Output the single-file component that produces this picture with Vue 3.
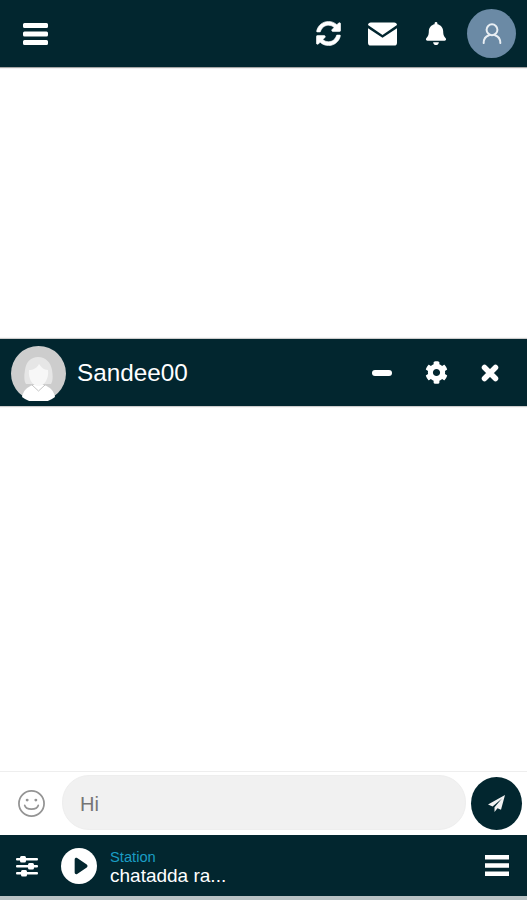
<script setup>
const topIcons = ['sync', 'mail', 'bell']
</script>

<template>
  <div class="page">
    <header class="topbar">
      <button class="icon-btn menu">
        <svg width="25" height="22" viewBox="0 0 25 22"><path d="M1.500 0h22a1.500 1.500 0 0 1 1.500 1.500v2a1.500 1.500 0 0 1-1.500 1.500h-22A1.500 1.500 0 0 1 0 3.500v-2A1.500 1.500 0 0 1 1.500 0zm0 8.500h22A1.500 1.500 0 0 1 25 10v2a1.500 1.500 0 0 1-1.500 1.500h-22A1.500 1.500 0 0 1 0 12v-2a1.500 1.500 0 0 1 1.500-1.500zm0 8.500h22a1.500 1.500 0 0 1 1.500 1.500v2a1.500 1.500 0 0 1-1.500 1.500h-22A1.500 1.500 0 0 1 0 20.500v-2A1.500 1.500 0 0 1 1.500 17z" fill="#fff"/></svg>
      </button>
      <div class="spacer"></div>
      <div class="top-actions">
        <template v-for="name in topIcons" :key="name">
          <svg v-if="name === 'sync'" class="sync" width="25" height="25" viewBox="0 0 512 512"><path fill="#fff" stroke="#fff" stroke-width="12" d="M370.700 133.300C339.500 104 298.900 88 255.800 88c-77.500.100-144.300 53.200-162.800 126.900-1.300 5.400-6.100 9.100-11.700 9.100H24.100c-7.500 0-13.200-6.800-11.800-14.200C33.900 94.900 134.800 8 256 8c66.400 0 126.800 26.100 171.300 68.700L463 41c15.100-15.100 41-4.400 41 17v134c0 13.300-10.700 24-24 24H346c-21.400 0-32.100-25.900-17-41l41.700-41.700zM32 296h134c21.400 0 32.100 25.900 17 41l-41.700 41.700c31.200 29.300 71.800 45.300 114.900 45.300 77.400-.1 144.300-53.100 162.800-126.800 1.300-5.400 6.100-9.100 11.700-9.100h57.300c7.500 0 13.200 6.800 11.800 14.200C478.100 417.100 377.200 504 256 504c-66.400 0-126.800-26.100-171.300-68.700L49 471c-15.100 15.100-41 4.400-41-17V320c0-13.300 10.700-24 24-24z"/></svg>
          <svg v-else-if="name === 'mail'" class="mail" width="29" height="24" viewBox="0 0 30 24"><path fill="#fff" d="M3 0h24a3 3 0 0 1 3 2.800L15 13 0 2.800A3 3 0 0 1 3 0z"/><path fill="#fff" d="M0 6l15 10L30 6v15a3 3 0 0 1-3 3H3a3 3 0 0 1-3-3z"/></svg>
          <svg v-else class="bell" width="22" height="23" viewBox="0 0 448 512"><path fill="#fff" d="M224 512c35.300 0 64-28.700 64-64H160c0 35.300 28.700 64 64 64zm215.400-149.700c-19.300-20.800-55.500-52-55.500-154.300 0-77.700-54.500-139.900-127.900-155.200V32a32 32 0 1 0-64 0v20.800C118.600 68.100 64.100 130.300 64.100 208c0 102.300-36.200 133.500-55.500 154.300-6 6.400-8.700 14.200-8.600 21.700.100 16.400 13 32 32.100 32h383.800c19.100 0 32-15.600 32.100-32 .100-7.500-2.600-15.300-8.600-21.700z"/></svg>
        </template>
        <div class="user-avatar">
          <svg width="20" height="21" viewBox="0 0 24 25" fill="none" stroke="#e8eef3" stroke-width="2.400" stroke-linecap="round"><circle cx="12" cy="8" r="6.500"/><path d="M2 24c0-6 3-8.500 6.500-9.500M22 24c0-6-3-8.500-6.500-9.500"/></svg>
        </div>
      </div>
    </header>

    <div class="blank-top"></div>

    <section class="chat-head">
      <div class="peer-avatar">
        <svg width="55" height="55" viewBox="0 0 55 55">
          <circle cx="27.500" cy="27.500" r="27.500" fill="#cdcdcd"/>
          <path fill="#e6e6e6" d="M15 38c-2-3-2-8-1-14 1-8 6-13 13-13 8 0 13 6 14 13 1 6 1 11-1 14z"/>
          <path fill="#fff" d="M11 51c1-6 5-10 11-12h11c6 2 10 6 11 12a27 27 0 0 1-33 0z"/>
          <path fill="#f7f7f7" d="M18 24c4 0 8-2 10-6 2 3 5 6 9 6 1 8-3 16-9.500 16S17 32 18 24z"/>
          <path fill="none" stroke="#b5b5b5" stroke-width=".8" d="M21 39l6.500 6 6.500-6"/>
        </svg>
      </div>
      <span class="peer-name">Sandee00</span>
      <div class="spacer"></div>
      <div class="head-actions">
        <span class="dash"></span>
        <svg width="23" height="23" viewBox="0 0 512 512"><path fill="#fff" d="M487.400 315.700l-42.600-24.600c4.300-23.200 4.300-47 0-70.200l42.600-24.600c4.900-2.800 7.100-8.600 5.500-14-11.100-35.600-30-67.800-54.700-94.600-3.800-4.100-10-5.100-14.800-2.300L380.800 110c-17.900-15.400-38.500-27.300-60.800-35.100V25.800c0-5.600-3.900-10.500-9.400-11.700-36.700-8.200-74.300-7.800-109.200 0-5.500 1.200-9.400 6.100-9.400 11.700V75c-22.200 7.900-42.800 19.800-60.800 35.100L88.700 85.500c-4.900-2.800-11-1.900-14.800 2.300-24.700 26.700-43.600 58.900-54.700 94.600-1.700 5.400.600 11.200 5.500 14L67.300 221c-4.300 23.200-4.300 47 0 70.200l-42.600 24.600c-4.900 2.800-7.100 8.600-5.500 14 11.100 35.600 30 67.800 54.700 94.600 3.800 4.100 10 5.100 14.800 2.300l42.600-24.600c17.900 15.400 38.500 27.300 60.800 35.100v49.200c0 5.600 3.900 10.500 9.400 11.700 36.700 8.200 74.300 7.800 109.200 0 5.500-1.200 9.400-6.100 9.400-11.700v-49.200c22.200-7.900 42.800-19.800 60.800-35.100l42.600 24.600c4.900 2.800 11 1.900 14.800-2.300 24.700-26.700 43.600-58.900 54.700-94.600 1.500-5.500-.7-11.300-5.600-14.100zM256 336c-44.100 0-80-35.900-80-80s35.900-80 80-80 80 35.900 80 80-35.900 80-80 80z"/></svg>
        <svg class="close" width="18" height="18" viewBox="0 0 18 18"><path d="M3.500 3.500l11 11m0-11l-11 11" stroke="#fff" stroke-width="5.500" stroke-linecap="round"/></svg>
      </div>
    </section>

    <div class="messages"></div>

    <section class="composer">
      <svg class="smile" width="29" height="29" viewBox="0 0 30 30" fill="none" stroke="#949494" stroke-width="1.800" stroke-linecap="round"><circle cx="15" cy="15" r="13"/><path d="M8 17c1.500 5 12.500 5 14 0"/><circle cx="10.500" cy="11.500" r="1.500" fill="#949494" stroke="none"/><circle cx="19.500" cy="11.500" r="1.500" fill="#949494" stroke="none"/></svg>
      <div class="msg-input">Hi</div>
      <button class="send">
        <svg width="17" height="17" viewBox="0 0 17 17"><path fill="#f2f2f2" d="M17 0L0 9.500l4.600 1.900L14 3.500 6.500 12.300V17l3-3.700 3.500 1.500z"/></svg>
      </button>
    </section>

    <footer class="player">
      <svg class="sliders" width="22" height="22" viewBox="0 0 22 22"><g fill="#fff"><rect y="3" width="22" height="2.600" rx="1"/><rect y="10" width="22" height="2.600" rx="1"/><rect y="17" width="22" height="2.600" rx="1"/><rect x="4" y="1" width="6" height="6.500" rx="1.500"/><rect x="12" y="8" width="6" height="6.500" rx="1.500"/><rect x="5" y="15" width="6" height="6.500" rx="1.500"/></g></svg>
      <div class="play">
        <svg width="15" height="18" viewBox="0 0 18 20"><path fill="#02262f" d="M2 2.200c0-1.600 1.700-2.500 3-1.700l11.500 7.800c1.200.8 1.200 2.600 0 3.400L5 19.500c-1.300.8-3-.1-3-1.700z"/></svg>
      </div>
      <div class="station">
        <span class="station-label">Station</span>
        <span class="station-name">chatadda ra...</span>
      </div>
      <div class="spacer"></div>
      <svg class="queue" width="24" height="21" viewBox="0 0 24 21"><path fill="#fff" d="M0 0h24v4.500H0zm0 8.200h24v4.500H0zm0 8.300h24V21H0z"/></svg>
    </footer>
    <div class="strip"></div>
  </div>
</template>

<style scoped>
.page {
  display: flex;
  flex-direction: column;
  height: 900px;
  overflow: hidden;
  background: #fff;
  font-family: "Liberation Sans", Arial, sans-serif;
}

.spacer {
  flex: 1;
}

.topbar {
  display: flex;
  align-items: center;
  height: 67px;
  flex: none;
  background: #02262f;
  box-shadow: 0 1px 1px rgba(0, 0, 0, 0.35);
  padding: 0 11px 0 23px;
  box-sizing: border-box;
}

.icon-btn {
  display: flex;
  padding: 0;
  border: none;
  background: none;
}

.top-actions {
  display: flex;
  align-items: center;
}

.sync {
  margin-right: 27px;
}

.mail {
  margin-right: 28px;
}

.bell {
  margin-right: 20px;
}

.user-avatar {
  display: flex;
  align-items: center;
  justify-content: center;
  width: 49px;
  height: 49px;
  border-radius: 50%;
  background: #6b8aa5;
}

.blank-top {
  height: 272px;
  flex: none;
}

.chat-head {
  display: flex;
  align-items: center;
  height: 67px;
  flex: none;
  background: #02262f;
  box-shadow: 0 0 1px 1px rgba(0, 0, 0, 0.2);
  padding: 0 28px 0 11px;
  box-sizing: border-box;
}

.peer-avatar {
  display: flex;
  width: 55px;
  height: 55px;
  margin-top: 1px;
}

.peer-name {
  margin-left: 11px;
  margin-top: 1px;
  font-size: 24.300px;
  color: #fff;
}

.head-actions {
  display: flex;
  align-items: center;
}

.dash {
  width: 20px;
  height: 6px;
  border-radius: 3px;
  background: #fff;
  margin-right: 33px;
}

.close {
  margin-left: 33px;
}

.messages {
  flex: 1;
}

.composer {
  display: flex;
  align-items: center;
  height: 64px;
  flex: none;
  border-top: 1px solid #eeeeee;
  box-sizing: border-box;
  padding: 0 5px 0 17px;
}

.smile {
  flex: none;
}

.msg-input {
  flex: 1;
  height: 55px;
  margin: 0 5px 3px 16px;
  padding-left: 17px;
  line-height: 56px;
  box-sizing: border-box;
  border-radius: 27px;
  background: #f1f1f1;
  border: 1px solid #eeeeee;
  font-size: 20px;
  color: #757575;
}

.send {
  display: flex;
  align-items: center;
  justify-content: center;
  flex: none;
  width: 51px;
  height: 53px;
  padding: 0;
  border: none;
  border-radius: 50%;
  background: #02262f;
}

.player {
  display: flex;
  align-items: center;
  height: 61px;
  flex: none;
  background: #02262f;
  padding: 0 18px 0 16px;
  box-sizing: border-box;
}

.play {
  display: flex;
  align-items: center;
  justify-content: center;
  width: 36px;
  height: 36px;
  margin-left: 23px;
  padding-left: 3px;
  box-sizing: border-box;
  border-radius: 50%;
  background: #fff;
}

.station {
  display: flex;
  flex-direction: column;
  margin-left: 13px;
  margin-top: 4px;
}

.station-label {
  font-size: 14.700px;
  line-height: 16px;
  color: #1a9cc4;
}

.station-name {
  font-size: 19px;
  line-height: 22px;
  color: #fff;
}

.strip {
  height: 4px;
  flex: none;
  background: #b9c2c4;
}
</style>
